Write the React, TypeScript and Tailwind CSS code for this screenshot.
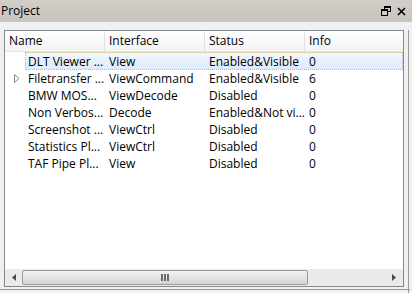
import React from "react";

const rows = [
  { name: "DLT Viewer ...", iface: "View", status: "Enabled&Visible", info: "0", sel: true },
  { name: "Filetransfer ...", iface: "ViewCommand", status: "Enabled&Visible", info: "6", arrow: true },
  { name: "BMW MOS...", iface: "ViewDecode", status: "Disabled", info: "0" },
  { name: "Non Verbos...", iface: "Decode", status: "Enabled&Not vi...", info: "0" },
  { name: "Screenshot ...", iface: "ViewCtrl", status: "Disabled", info: "0" },
  { name: "Statistics Pl...", iface: "ViewCtrl", status: "Disabled", info: "0" },
  { name: "TAF Pipe Pl...", iface: "View", status: "Disabled", info: "0" },
];

export default function App() {
  return (
    <div
      className="relative w-[412px] h-[293px] overflow-hidden bg-[#f0f0f0] text-[12px] text-black"
      style={{ fontFamily: '"Open Sans", "Noto Sans", "Liberation Sans", sans-serif' }}
    >
      {/* title bar */}
      <div className="flex h-[22px] items-center justify-between bg-gradient-to-b from-[#d3cfc8] to-[#c8c4bc] pl-[1px] pr-[6px]">
        <span className="leading-none">Project</span>
        <div className="flex items-center gap-[6px]">
          <svg width="10" height="10" viewBox="0 0 10 10">
            <rect x="3.5" y="0.5" width="6" height="5" fill="none" stroke="#000" />
            <rect x="3.5" y="0.5" width="6" height="1.5" fill="#000" />
            <rect x="0.5" y="3.5" width="6" height="6" fill="#d0ccc4" stroke="#000" />
            <rect x="0.5" y="3.5" width="6" height="1.5" fill="#000" />
          </svg>
          <svg width="9" height="9" viewBox="0 0 9 9">
            <path d="M1 1 L8 8 M8 1 L1 8" stroke="#000" strokeWidth="1.6" />
          </svg>
        </div>
      </div>

      {/* panel */}
      <div className="flex pt-[8px] pl-[4px]">
        <div className="flex h-[257px] w-[400px] flex-col border border-[#828790] bg-white">
          {/* header */}
          <div className="flex h-[21px] border-b border-[#e5e5e5] bg-gradient-to-b from-white to-[#f2f3f5]">
            {["Name", "Interface", "Status", "Info"].map((h, i) => (
              <div
                key={h}
                className={`flex h-full items-center pl-[4px] ${i < 3 ? "w-[100px] border-r border-[#dfe1e5]" : "flex-1"}`}
              >
                {h}
              </div>
            ))}
          </div>

          {/* rows */}
          <div className="flex flex-1 flex-col pt-[1px]">
            {rows.map((r) => (
              <div key={r.name} className="relative flex h-[17px] items-center">
                {r.sel && (
                  <div className="absolute left-[20px] right-[0px] top-[-1px] h-[18px] border border-dotted border-[#c9b98a] bg-gradient-to-b from-[#f1f7fe] to-[#dcebfc]" />
                )}
                <div className="relative flex w-[100px] items-center">
                  <div className="flex w-[23px] items-center justify-center">
                    {r.arrow && (
                      <svg width="6" height="9" viewBox="0 0 6 9">
                        <path d="M0.5 0.5 L5 4.5 L0.5 8.5 Z" fill="none" stroke="#8a8a8a" />
                      </svg>
                    )}
                  </div>
                  <span className="whitespace-nowrap">{r.name}</span>
                </div>
                <div className="relative w-[100px] pl-[4px] whitespace-nowrap">{r.iface}</div>
                <div className="relative w-[100px] pl-[4px] whitespace-nowrap">{r.status}</div>
                <div className="relative flex-1 pl-[4px]">{r.info}</div>
              </div>
            ))}
          </div>

          {/* horizontal scrollbar */}
          <div className="flex h-[17px] items-center bg-[#eaeaea] px-[1px]">
            <div className="flex w-[16px] items-center justify-center">
              <svg width="4" height="7" viewBox="0 0 4 7">
                <path d="M4 0 L0 3.5 L4 7 Z" fill="#4a4a4a" />
              </svg>
            </div>
            <div className="flex h-[15px] w-[286px] items-center justify-center rounded-[2px] border border-[#9a9a9a] bg-gradient-to-b from-[#f2f2f2] to-[#d4d4d4]">
              <div className="flex gap-[1px]">
                <div className="h-[7px] w-[2px] bg-[#6b6b6b]" />
                <div className="h-[7px] w-[2px] bg-[#6b6b6b]" />
                <div className="h-[7px] w-[2px] bg-[#6b6b6b]" />
              </div>
            </div>
            <div className="flex-1" />
            <div className="flex w-[16px] items-center justify-center">
              <svg width="4" height="7" viewBox="0 0 4 7">
                <path d="M0 0 L4 3.5 L0 7 Z" fill="#4a4a4a" />
              </svg>
            </div>
          </div>
        </div>
        <div className="ml-[4px] h-[263px] w-[1px] bg-[#9a9a9a]" />
      </div>

      {/* bottom tab edges */}
      <div className="absolute bottom-[0px] left-[0px] h-[4px] w-[412px]">
        <div className="absolute left-[0px] top-[0px] h-[1px] w-[410px] bg-[#9a9a9a]" />
      </div>
    </div>
  );
}
